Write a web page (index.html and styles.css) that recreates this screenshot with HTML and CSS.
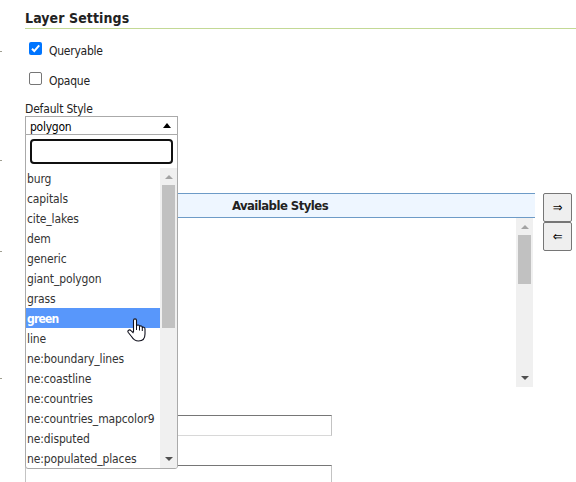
FILE: index.html
```html
<!DOCTYPE html>
<html lang="en">
<head>
<meta charset="utf-8">
<title>Layer Settings</title>
<link rel="stylesheet" href="styles.css">
</head>
<body>
<div class="page">
  <aside class="rail"><i></i><i></i><i></i><i></i></aside>
  <main>
    <h2><span>Layer Settings</span></h2>
    <div class="check"><span class="box checked"><svg viewBox="0 0 13 13"><path d="M3 6.8 5.3 9.1 10.2 3.3" fill="none" stroke="#fff" stroke-width="2"/></svg></span><span>Queryable</span></div>
    <div class="check"><span class="box"></span><span>Opaque</span></div>
    <div class="label">Default Style</div>
    <div class="select">
      <div class="value"><span>polygon</span><svg width="8" height="5" viewBox="0 0 8 5"><path d="M0 5 4 0 8 5z" fill="#000"/></svg></div>
      <div class="menu">
        <div class="search"></div>
        <div class="options">
          <ul>
            <li>burg</li><li>capitals</li><li>cite_lakes</li><li>dem</li><li>generic</li><li>giant_polygon</li><li>grass</li><li class="active">green</li><li>line</li><li>ne:boundary_lines</li><li>ne:coastline</li><li>ne:countries</li><li>ne:countries_mapcolor9</li><li>ne:disputed</li><li>ne:populated_places</li>
          </ul>
          <div class="scroll">
            <svg width="8" height="4" viewBox="0 0 8 4"><path d="M0 4 4 0 8 4z" fill="#a3a3a3"/></svg>
            <div class="thumb"></div>
            <svg class="down" width="8" height="4" viewBox="0 0 8 4"><path d="M0 0 4 4 8 0z" fill="#505050"/></svg>
          </div>
        </div>
      </div>
      <svg class="cursor" width="19" height="24" viewBox="0 0 19 24"><path d="M6.5 14V2.5C6.5.3 9.5.3 9.5 2.5V8C10 6.500 12.500 6.700 12.500 8.500 13.500 7.300 15.300 8 15.300 9.500 16.500 8.700 18 9.500 18 11V16C18 20 16 23 11.500 23 7.500 23 6 21 4.500 18.500L1.300 14.500C0 12.500 2.500 11 4 12.600L6.500 15" fill="#fff" stroke="#10101c" stroke-width="1.100" stroke-linejoin="round"/><path d="M9.500 7.500V12M12.500 8.500V12.500M15.300 9.500V13" fill="none" stroke="#10101c"/></svg>
    </div>
    <div class="styles">
      <div class="table">
        <div class="thead"><span>Available Styles</span></div>
        <div class="tbody">
          <div class="scroll">
            <svg width="8" height="4" viewBox="0 0 8 4"><path d="M0 4 4 0 8 4z" fill="#a3a3a3"/></svg>
            <div class="thumb short"></div>
            <svg class="down" width="8" height="4" viewBox="0 0 8 4"><path d="M0 0 4 4 8 0z" fill="#505050"/></svg>
          </div>
        </div>
      </div>
      <div class="moves"><div class="move">⇒</div><div class="move">⇐</div></div>
    </div>
    <div class="field"></div>
    <div class="field"></div>
  </main>
</div>
</body>
</html>
```
FILE: styles.css
```css
* { box-sizing: border-box; }
body { margin: 0; background: #fff; color: #222; font: 12px/20px "DejaVu Sans Condensed", "DejaVu Sans", sans-serif; font-stretch: condensed; letter-spacing: -0.25px; }
svg { display: block; flex: none; }
.page { display: flex; width: 576px; height: 482px; overflow: hidden; }
.rail { width: 25px; flex: none; display: grid; grid-template-rows: 109px 91px 127px 20px; padding-top: 51px; }
.rail i { width: 2px; height: 1px; background: #a09f91; }
main { flex: none; width: 551px; }
h2 { margin: 0 0 13px; height: 29px; padding-top: 8px; border-bottom: 1px solid #c3d995; font-size: 14px; line-height: 20px; letter-spacing: 0.1px; }
.check { display: flex; height: 13px; margin: 0 0 17px 4px; gap: 7px; line-height: 19px; }
.box { width: 13px; height: 13px; border: 1px solid #767676; border-radius: 2px; }
.box.checked { background: #0075ff; border: 0; }
.label { height: 14px; line-height: 14px; letter-spacing: -0.18px; }
.select { position: relative; width: 153px; height: 19px; z-index: 2; line-height: 20px; }
.value { height: 19px; border: 1px solid #aaa; background: #fff; color: #000; padding: 0 6px 0 4px; display: flex; justify-content: space-between; align-items: center; }
.value span { padding-top: 2px; }
.menu { position: absolute; top: 18px; left: 0; width: 153px; height: 335px; border: 1px solid #aaa; border-radius: 0 0 3px 3px; background: #fff; padding-top: 4px; overflow: hidden; }
.search { margin: 0 4px 4px; height: 25px; border: 2px solid #101010; border-radius: 4px; }
.options { display: flex; height: 300px; }
ul { list-style: none; margin: 0; padding: 0; width: 134px; }
li { height: 20px; line-height: 23px; padding-left: 1px; white-space: nowrap; color: #333; letter-spacing: -0.12px; }
.active { background: #5897fb; color: #fff; font-weight: bold; letter-spacing: -0.8px; }
.scroll { width: 17px; background: #f0f0f0; height: 100%; display: flex; flex-direction: column; align-items: center; padding: 7px 0; }
.thumb { width: 13px; height: 143px; margin-top: 6px; background: #c1c1c1; }
.thumb.short { height: 49px; }
.down { margin-top: auto; }
.cursor { position: absolute; left: 102px; top: 202px; }
.styles { display: flex; gap: 8px; margin-top: 58px; height: 194px; }
.table { width: 510px; }
.thead { height: 25px; border: solid #6d9bc7; border-width: 1px 0; background: #eef6ff; text-align: center; font-size: 13px; font-weight: bold; line-height: 24px; letter-spacing: -0.55px; }
.tbody { height: 169px; display: flex; justify-content: flex-end; padding-right: 2px; }
.moves { width: 29px; }
.move { height: 29px; border: 1px solid #767676; border-radius: 2px; background: #efefef; color: #000; text-align: center; line-height: 27px; font-size: 13px; }
.field { width: 307px; height: 21px; margin: 28px 0 29px; border: 1px solid; border-color: #767676 #c3c3c3 #d8d8d8 #c3c3c3; background: #fff; }
```
